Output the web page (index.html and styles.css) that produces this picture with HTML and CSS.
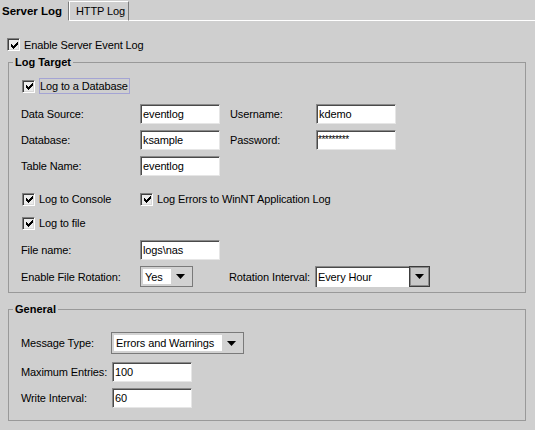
FILE: index.html
```html
<!DOCTYPE html>
<html>
<head>
<meta charset="utf-8">
<link rel="stylesheet" href="styles.css">
</head>
<body>
<div class="tabs">
  <div class="tab active">Server Log</div>
  <div class="tab inactive">HTTP Log</div>
  <div class="tab-fill"></div>
</div>
<div class="panel">
  <div class="check top-check">
    <span class="box"><svg width="7" height="7" viewBox="0 0 7 7"><path d="M0 2H1V3H2V4H3V3H4V2H5V1H6V0H7V3H6V4H5V5H4V6H3V7H2V6H1V5H0Z" fill="#000"/></svg></span>
    <span>Enable Server Event Log</span>
  </div>

  <fieldset class="group target">
    <legend>Log Target</legend>
    <div class="body target-body">
      <div class="check r-db">
        <span class="box"><svg width="7" height="7" viewBox="0 0 7 7"><path d="M0 2H1V3H2V4H3V3H4V2H5V1H6V0H7V3H6V4H5V5H4V6H3V7H2V6H1V5H0Z" fill="#000"/></svg></span>
        <span class="focus">Log to a Database</span>
      </div>
      <div class="grid r-field r-ds">
        <span>Data Source:</span><div class="field">eventlog</div>
        <span>Username:</span><div class="field">kdemo</div>
      </div>
      <div class="grid r-field r-next">
        <span>Database:</span><div class="field">ksample</div>
        <span>Password:</span><div class="field pw">*********</div>
      </div>
      <div class="grid r-field r-next">
        <span>Table Name:</span><div class="field">eventlog</div>
      </div>
      <div class="grid r-chk r-console">
        <div class="check">
          <span class="box"><svg width="7" height="7" viewBox="0 0 7 7"><path d="M0 2H1V3H2V4H3V3H4V2H5V1H6V0H7V3H6V4H5V5H4V6H3V7H2V6H1V5H0Z" fill="#000"/></svg></span>
          <span>Log to Console</span>
        </div>
        <div class="check span-rest">
          <span class="box"><svg width="7" height="7" viewBox="0 0 7 7"><path d="M0 2H1V3H2V4H3V3H4V2H5V1H6V0H7V3H6V4H5V5H4V6H3V7H2V6H1V5H0Z" fill="#000"/></svg></span>
          <span>Log Errors to WinNT Application Log</span>
        </div>
      </div>
      <div class="grid r-chk r-file">
        <div class="check">
          <span class="box"><svg width="7" height="7" viewBox="0 0 7 7"><path d="M0 2H1V3H2V4H3V3H4V2H5V1H6V0H7V3H6V4H5V5H4V6H3V7H2V6H1V5H0Z" fill="#000"/></svg></span>
          <span>Log to file</span>
        </div>
      </div>
      <div class="grid r-field r-fname">
        <span>File name:</span><div class="field">logs\nas</div>
      </div>
      <div class="grid r-combo r-rot">
        <span>Enable File Rotation:</span>
        <div class="combo combo-yes">
          <span class="val">Yes</span>
          <span class="arrow"><svg width="9" height="5" viewBox="0 0 9 5"><path d="M0 0H9L4.5 5Z" fill="#000"/></svg></span>
        </div>
        <span class="rot-label">Rotation Interval:</span>
        <div class="ecombo">
          <span class="eval">Every Hour</span>
          <span class="ebtn"><svg width="9" height="5" viewBox="0 0 9 5"><path d="M0 0H9L4.5 5Z" fill="#000"/></svg></span>
        </div>
      </div>
    </div>
  </fieldset>

  <fieldset class="group general">
    <legend>General</legend>
    <div class="body general-body">
      <div class="ggrid r-msg">
        <span>Message Type:</span>
        <div class="combo combo-msg">
          <span class="val">Errors and Warnings</span>
          <span class="arrow"><svg width="9" height="5" viewBox="0 0 9 5"><path d="M0 0H9L4.5 5Z" fill="#000"/></svg></span>
        </div>
      </div>
      <div class="ggrid r-field r-max">
        <span>Maximum Entries:</span><div class="field">100</div>
      </div>
      <div class="ggrid r-field r-next">
        <span>Write Interval:</span><div class="field">60</div>
      </div>
    </div>
  </fieldset>
</div>
</body>
</html>
```

FILE: styles.css
```css
html, body {
  margin: 0;
  padding: 0;
}
body {
  width: 535px;
  height: 430px;
  background: #cfcfcf;
  font-family: "Liberation Sans", Arial, sans-serif;
  font-size: 11px;
  letter-spacing: -0.12px;
  color: #000;
  overflow: hidden;
}

/* tabs */
.tabs {
  display: flex;
  height: 21px;
}
.tab {
  box-sizing: border-box;
  height: 21px;
}
.tab.active {
  width: 68px;
  padding-left: 2px;
  font-weight: bold;
  font-size: 11.5px;
  letter-spacing: 0;
  line-height: 22px;
}
.tab.inactive {
  width: 61px;
  margin-top: 1px;
  height: 20px;
  padding-left: 7px;
  border-left: 1px solid #7c7c7c;
  border-right: 1px solid #7c7c7c;
  border-top: 1px solid #fff;
  border-bottom: 1px solid #fff;
  box-shadow: inset 1px 0 0 #fff;
  line-height: 18px;
}
.tab-fill {
  flex: 1;
  border-bottom: 1px solid #fff;
}

/* checkboxes */
.check {
  display: flex;
  align-items: center;
  gap: 4px;
}
.box {
  box-sizing: border-box;
  width: 13px;
  height: 13px;
  flex: none;
  border: 1px solid;
  border-color: #808080 #fff #fff #808080;
  box-shadow: inset 1px 1px 0 #404040, inset -1px -1px 0 #d8d8d8;
  background: #ececec;
  display: flex;
  align-items: center;
  justify-content: center;
}
.box svg {
  display: block;
  margin: 1px 0 0 1px;
}
.top-check {
  margin: 17px 0 0 7px;
  height: 13px;
}

/* groups */
.group {
  box-sizing: border-box;
  width: 518px;
  margin: 4px 0 0 8px;
  padding: 0;
  border: 1px solid #999;
  min-width: 0;
}
.group legend {
  margin-left: 4px;
  padding: 0 2px;
  font-weight: bold;
  font-size: 11px;
  letter-spacing: 0;
  line-height: 14px;
}
.general {
  margin-top: 9px;
}
.body {
  padding-left: 12px;
}
.target-body {
  padding-top: 9px;
  padding-bottom: 5px;
}
.general-body {
  padding-top: 16px;
  padding-bottom: 12px;
}

.r-db {
  height: 16px;
  margin-left: 1px;
}
.focus {
  box-sizing: border-box;
  height: 16px;
  line-height: 14px;
  border: 1px solid #a4a4d4;
  padding: 0 1px 0 0;
}

.grid {
  display: grid;
  grid-template-columns: 119px 90px 86px auto;
  align-items: center;
}
.ggrid {
  display: grid;
  grid-template-columns: 91px auto;
  align-items: center;
}
.r-field {
  height: 20px;
}
.r-ds {
  margin-top: 10px;
}
.r-next {
  margin-top: 6px;
}
.r-chk {
  height: 16px;
}
.r-chk > .check:first-child {
  margin-left: 1px;
}
.r-console {
  margin-top: 15px;
}
.r-file {
  margin-top: 8px;
}
.r-fname {
  margin-top: 9px;
}
.span-rest {
  grid-column: 2 / span 3;
}
.r-combo {
  height: 21px;
  margin-top: 6px;
}
.rot-label {
  margin-left: -1px;
}

/* text fields */
.field {
  box-sizing: border-box;
  width: 80px;
  height: 20px;
  background: #fff;
  border-top: 1px solid #8a8a8a;
  border-left: 1px solid #8a8a8a;
  border-right: 1px solid #e6e6e6;
  border-bottom: 1px solid #e6e6e6;
  box-shadow: inset 1px 1px 0 #4a4a4a;
  padding-left: 2px;
  line-height: 18px;
  white-space: nowrap;
  overflow: hidden;
}
.field.pw {
  letter-spacing: -0.5px;
  padding-left: 1px;
  font-size: 10px;
}

/* combo boxes */
.combo {
  box-sizing: border-box;
  display: flex;
  border: 1px solid #7a7a7a;
  padding: 2px;
  background: #d2d2d2;
}
.combo .val {
  flex: 1;
  background: #fff;
  padding-left: 2px;
  display: flex;
  align-items: center;
}
.combo .arrow {
  width: 19px;
  display: flex;
  align-items: center;
  justify-content: center;
}
.combo-yes {
  width: 53px;
  height: 21px;
}
.combo-msg {
  width: 133px;
  height: 22px;
  margin-left: -1px;
}
.r-max {
  margin-top: 8px;
}

.ecombo {
  box-sizing: border-box;
  display: flex;
  width: 115px;
  height: 21px;
  margin-left: -1px;
}
.ecombo .eval {
  flex: 1;
  background: #fff;
  border-top: 1px solid #8a8a8a;
  border-left: 1px solid #8a8a8a;
  box-shadow: inset 1px 1px 0 #4a4a4a;
  padding-left: 2px;
  display: flex;
  align-items: center;
}
.ecombo .ebtn {
  box-sizing: border-box;
  width: 21px;
  border: 1px solid #3c3c3c;
  box-shadow: inset 1px 1px 0 #8a8a8a, inset -1px -1px 0 #8a8a8a;
  background: #c8c8c8;
  display: flex;
  align-items: center;
  justify-content: center;
}
```
